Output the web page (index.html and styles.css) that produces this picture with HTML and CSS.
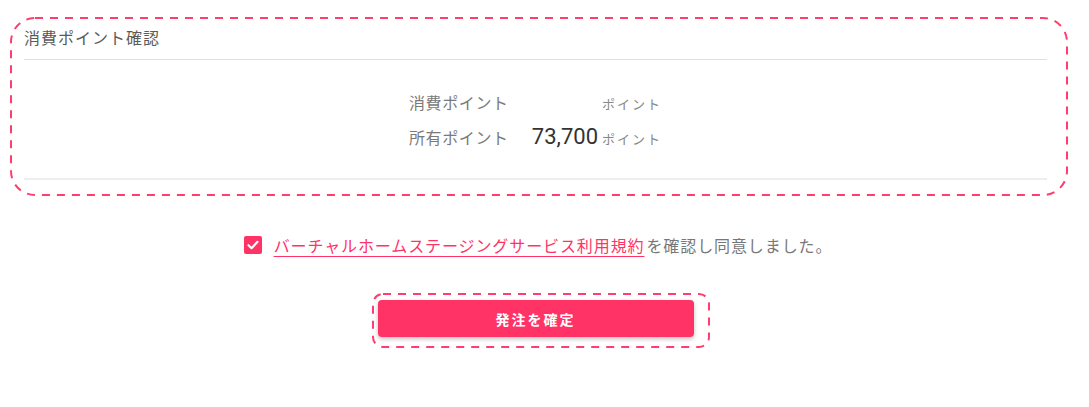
FILE: index.html
```html
<!DOCTYPE html>
<html lang="ja">
<head>
  <meta charset="UTF-8" />
  <title>発注確認</title>
  <link rel="stylesheet" href="styles.css">
</head>
<body>
  <div class="page">
    <section class="points-card">
      <h3 class="card-title">消費ポイント確認</h3>
      <div class="points-body">
        <div class="points-grid">
          <span class="points-label">消費ポイント</span>
          <span class="points-value"></span>
          <span class="points-unit">ポイント</span>
          <span class="points-label">所有ポイント</span>
          <span class="points-value">73,700</span>
          <span class="points-unit">ポイント</span>
        </div>
      </div>
      <svg class="highlight highlight-card" width="1058" height="179" viewBox="0 0 1058 179">
        <rect x="1" y="1" width="1056" height="177" rx="24" ry="24" />
      </svg>
    </section>

    <label class="agree">
      <span class="checkbox">
        <svg width="12" height="10" viewBox="0 0 12 10">
          <path d="M1.5 5.2 L4.6 8.2 L10.5 1.8" />
        </svg>
      </span>
      <span class="agree-text"><a href="#" class="terms-link">バーチャルホームステージングサービス利用規約</a>を確認し同意しました。</span>
    </label>

    <div class="actions">
      <div class="submit-wrap">
        <button type="button" class="submit-btn">発注を確定</button>
        <svg class="highlight highlight-btn" width="338" height="55" viewBox="0 0 338 55">
          <rect x="1" y="1" width="336" height="53" rx="10" ry="10" />
        </svg>
      </div>
    </div>
  </div>
</body>
</html>
```

FILE: styles.css
```css
* {
  box-sizing: border-box;
}

body, html {
  margin: 0;
  background: #ffffff;
  font-family: "Noto Sans CJK JP", "Noto Sans", sans-serif;
  color: #555;
}

.page {
  width: 1071px;
  padding: 25px 24px 60px;
}

/* points card */
.points-card {
  position: relative;
}

.card-title {
  margin: 0;
  padding-bottom: 10px;
  font-size: 16px;
  line-height: 24px;
  font-weight: 400;
  letter-spacing: 1px;
  color: #5a5a5a;
  border-bottom: 1px solid #e0e0e0;
}

.points-body {
  padding: 24px 0 24px;
  border-bottom: 2px solid #eeeeee;
  display: flex;
  justify-content: center;
}

.points-grid {
  display: grid;
  grid-template-columns: 100px 85px 60px;
  column-gap: 4px;
  grid-auto-rows: 35px;
  align-items: center;
}

.points-label {
  font-size: 16px;
  letter-spacing: 0.6px;
  color: #7a7a7a;
}

.points-value {
  text-align: right;
  font-family: Roboto, "Noto Sans", sans-serif;
  font-size: 22px;
  color: #333;
}

.points-unit {
  font-size: 13px;
  letter-spacing: 2px;
  color: #888;
  padding-top: 3px;
}

/* dashed highlight overlay */
.highlight {
  position: absolute;
  display: block;
  pointer-events: none;
  overflow: visible;
}

.highlight rect {
  fill: none;
  stroke: #ff3d70;
  stroke-width: 2;
  stroke-dasharray: 8 7;
}

.highlight-card {
  left: -14px;
  top: -8px;
  width: 1058px;
  height: 179px;
}

/* agreement */
.agree {
  display: flex;
  justify-content: center;
  align-items: center;
  gap: 12px;
  margin-top: 50px;
  padding-left: 5px;
  height: 30px;
  cursor: pointer;
}

.checkbox {
  width: 18px;
  height: 18px;
  border-radius: 2px;
  background: #ff3366;
  display: flex;
  align-items: center;
  justify-content: center;
}

.checkbox path {
  fill: none;
  stroke: #fff;
  stroke-width: 2.2;
  stroke-linecap: round;
  stroke-linejoin: round;
}

.agree-text {
  font-size: 16px;
  letter-spacing: 0.9px;
  color: #777;
}

.terms-link {
  color: #ff3366;
  margin-right: 2px;
  text-decoration: underline;
  text-underline-offset: 4px;
  text-decoration-thickness: 1px;
}

/* submit */
.actions {
  display: flex;
  justify-content: center;
  margin-top: 40px;
}

.submit-wrap {
  position: relative;
}

.submit-btn {
  display: block;
  width: 316px;
  height: 37px;
  border: none;
  border-radius: 4px;
  background: #ff3366;
  color: #fff;
  font-family: "Noto Sans CJK JP", sans-serif;
  font-size: 14px;
  font-weight: 700;
  letter-spacing: 2px;
  box-shadow: 0 2px 4px rgba(0, 0, 0, 0.25);
  cursor: pointer;
}

.highlight-btn {
  left: -6px;
  top: -7px;
  width: 338px;
  height: 55px;
}
```
